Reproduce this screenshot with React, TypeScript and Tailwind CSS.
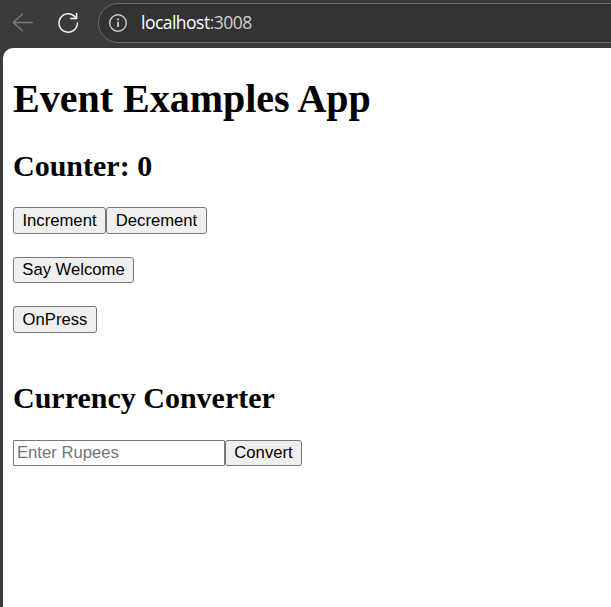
import { useState } from 'react';
import type { ReactNode } from 'react';

type ButtonProps = { className: string; onClick?: () => void; children: ReactNode };

function NativeButton({ className, onClick, children }: ButtonProps) {
  return (
    <button
      onClick={onClick}
      className={`shrink-0 whitespace-nowrap rounded-[3px] border border-[#767676] bg-[#efefef] text-center font-['Liberation_Sans',Arial,sans-serif] text-[16.67px] leading-6 text-black ${className}`}
    >
      {children}
    </button>
  );
}

function BrowserBar() {
  return (
    <header className="flex h-12 items-start pl-3 pt-[3px]">
      <svg className="mt-[9px] h-5 w-[22px] shrink-0" viewBox="0 0 22 20" fill="none" stroke="#7c7c7c" strokeWidth="1.3" strokeLinecap="round" strokeLinejoin="round">
        <path d="M20.5 10.5H1.2M10.5 1.9 1.2 10.5l9.3 8.2" />
      </svg>
      <svg className="ml-6 mt-[9px] h-[22px] w-[21px] shrink-0" viewBox="0 0 21 22" fill="none" stroke="#f5f5f5" strokeWidth="1.5" strokeLinecap="round" strokeLinejoin="round">
        <path d="M19.4 10.9a9.2 9.2 0 1 1-2.2-5.9l1.3 1.4M18.6 1.6v4.9h-5.8" />
      </svg>
      <div className="-mr-8 ml-[19px] flex h-10 flex-1 rounded-l-full border border-[#6b6b6b] bg-[#333333] pl-[9px]">
        <svg className="mt-[9px] h-5 w-5 shrink-0" viewBox="0 0 20 20" fill="none" stroke="#cccccc" strokeWidth="1.4">
          <circle cx="10" cy="10" r="8.3" />
          <path d="M10 8.7v5.2" strokeWidth="1.8" />
          <circle cx="10" cy="6.3" r="1.1" fill="#cccccc" stroke="none" />
        </svg>
        <span className="ml-[13px] mt-[6px] font-['Open_Sans',sans-serif] text-[17.5px] leading-6 tracking-[-0.52px] text-white">
          localhost<span className="text-[#cfcfcf]">:3008</span>
        </span>
      </div>
    </header>
  );
}

export default function App() {
  const [count, setCount] = useState(0);
  return (
    <div className="flex h-[607px] w-full flex-col overflow-hidden bg-[#3b3b3b]">
      <BrowserBar />
      <main className="ml-[3px] flex flex-1 flex-col items-start rounded-tl-[10px] bg-white pl-[10px] font-['Liberation_Serif','Times_New_Roman',serif] text-black">
        <h1 className="mt-7 text-[40px] font-bold leading-[46px]">Event Examples App</h1>
        <h2 className="mt-[27px] text-[30px] font-bold leading-[34px]">Counter: {count}</h2>
        <div className="mt-6 flex">
          <NativeButton className="h-[27px] w-[93px]" onClick={() => setCount(count + 1)}>Increment</NativeButton>
          <NativeButton className="h-[27px] w-[101px]" onClick={() => setCount(count - 1)}>Decrement</NativeButton>
        </div>
        <NativeButton className="mt-[23px] h-[26px] w-[121px]">Say Welcome</NativeButton>
        <NativeButton className="mt-[23px] h-[27px] w-[84px]">OnPress</NativeButton>
        <h2 className="mt-12 text-[30px] font-bold leading-[34px]">Currency Converter</h2>
        <div className="mt-[25px] flex">
          <input
            placeholder="Enter Rupees"
            className="h-[26px] w-[212px] rounded-[1px] border border-[#767676] bg-white px-[3px] font-['Liberation_Sans',Arial,sans-serif] text-[16.67px] placeholder:text-[#757575]"
          />
          <NativeButton className="h-[26px] w-[77px]">Convert</NativeButton>
        </div>
      </main>
    </div>
  );
}
